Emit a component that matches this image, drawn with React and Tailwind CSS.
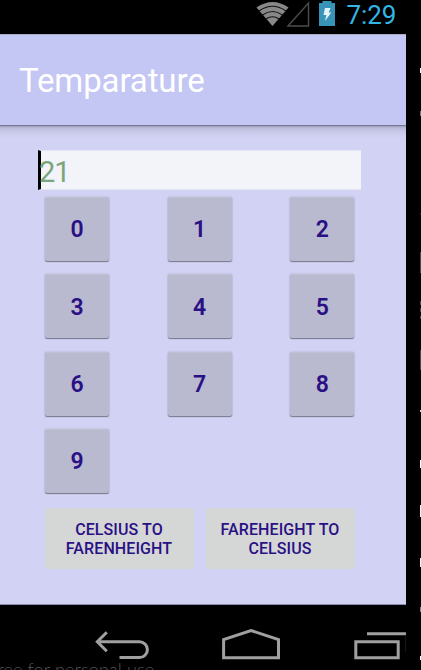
const DIGITS = ['0', '1', '2', '3', '4', '5', '6', '7', '8', '9'];

// Slivers of the emulator side controls: [top, height, colour]
const EDGE_MARKS = [
  [68, 5, '#ffffff'], [111, 5, '#777777'], [213, 2, '#222222'], [252, 21, '#484848'],
  [301, 4, '#484848'], [308, 4, '#484848'], [316, 3, '#484848'], [350, 20, '#484848'],
  [410, 2, '#dddddd'], [460, 8, '#ffffff'], [505, 12, '#f4f4f4'], [558, 9, '#f4f4f4'],
  [607, 5, '#888888'], [656, 4, '#ffffff'],
];

function StatusBar() {
  return (
    <header className="flex h-[34px] items-start bg-black pl-[255px] text-[#33b5e5]">
      <svg width="82" height="30" viewBox="0 0 82 30" className="shrink-0">
        <path d="M17.5 26 L1.5 7.5 Q17.5 -3.5 33.5 7.5Z" fill="#888" />
        <path d="M4 11 Q17.5 1.5 31 11 M7.5 15 Q17.5 8 27.5 15 M11 19 Q17.5 14.5 24 19" fill="none" stroke="#111" strokeWidth="1.2" />
        <path d="M33 26 L53.5 3 V26Z" fill="none" stroke="#4d4d4d" strokeWidth="1.4" />
        <path d="M64 3 H67.5 V1 H76.5 V3 H80 V26 H64Z" fill="#3794b8" />
        <path d="M70 8 H75.5 L73.7 12.5 H76.3 L70 21 L71.4 15 H68.5Z" fill="#e4f1f6" />
      </svg>
      <span className="ml-[9.5px] text-[26px] leading-[31px] tracking-[-0.1px]">7:29</span>
    </header>
  );
}

function DigitKey({ label }) {
  return (
    <button className="h-16 w-16 rounded-[2px] border-t border-[#c1c1d1] bg-[#b9b9cf] pt-[2px] text-[23px] font-semibold text-[#2a1085] shadow-[0_1px_1px_#77778b,0_0_2px_#aaaac3]">
      {label}
    </button>
  );
}

function ConvertKey({ children }) {
  return (
    <button className="h-[61px] w-[149px] rounded-[3px] bg-[#d5d7d7] pt-[2px] text-center text-[16px] leading-[19px] font-medium tracking-[0.1px] text-[#2a1085]">
      {children}
    </button>
  );
}

function NavBar() {
  return (
    <nav className="h-[65px] bg-black">
      <svg width="406" height="65" viewBox="0 0 406 65" fill="none">
        <g stroke="#a0a0a0" strokeWidth="3">
          <path d="M98 36.8 H139.5 A7.9 7.9 0 0 1 139.5 52.6 H119.5" />
          <path d="M106.8 27.3 L97.3 36.8 L106.8 46.3" />
          <path d="M223.6 52.8 V34.6 L251 25.5 L278.5 34.6 V52.8Z" />
          <path d="M367 28.7 H406" />
          <path d="M355.8 36.8 H398.2 V52.8 H355.8Z" />
        </g>
        <path d="M405.5 30 V47" stroke="#181818" />
      </svg>
    </nav>
  );
}

export default function App() {
  return (
    <div className="relative flex h-[670px] w-[421px] overflow-hidden bg-black font-['Roboto',sans-serif]">
      <div className="flex w-[406px] shrink-0 flex-col">
        <StatusBar />
        <div className="flex h-[91px] items-center border-t border-[#a9abc8] bg-[#c4c6f3] pt-[2px] pl-[19px]">
          <h1 className="text-[33px] leading-[40px] tracking-[-0.12px] text-white">Temparature</h1>
        </div>
        <main className="flex h-[480px] flex-col border-t border-b border-t-[#777990] border-b-[#8f90ae] bg-[#d1d2f4] bg-[linear-gradient(#9c9db8_0px,#babbd9_2px,#c9caea_6px,#d1d2f4_12px)] pt-6 pl-[38px]">
          <div className="flex h-[40px] w-[323px] items-center border-y border-l-[3px] border-y-[#e5e5f4] border-l-black bg-[#f3f3fa] pt-[3px] text-[29px] leading-[36px] tracking-[-1px] text-[#7ba57b]">
            <span className="-ml-0.5">21</span>
          </div>
          <div className="mt-[7px] ml-[7px] grid w-[310px] auto-rows-[64px] grid-cols-[64px_64px_64px] gap-x-[58.7px] gap-y-[13.3px]">
            {DIGITS.map((digit) => <DigitKey key={digit} label={digit} />)}
          </div>
          <div className="mt-[15px] ml-[6.5px] flex gap-3">
            <ConvertKey>CELSIUS TO<br />FARENHEIGHT</ConvertKey>
            <ConvertKey>FAREHEIGHT TO<br />CELSIUS</ConvertKey>
          </div>
        </main>
        <NavBar />
      </div>
      <span className="absolute -left-[12px] top-[658px] text-[18px] leading-[22px] font-light tracking-[0.15px] whitespace-nowrap text-[#555] font-['Lato',sans-serif]">Free for personal use</span>
      <svg className="absolute top-0 right-0" width="1" height="670">
        {EDGE_MARKS.map(([y, height, fill]) => <rect key={y} y={y} width="1" height={height} fill={fill} />)}
      </svg>
    </div>
  );
}
